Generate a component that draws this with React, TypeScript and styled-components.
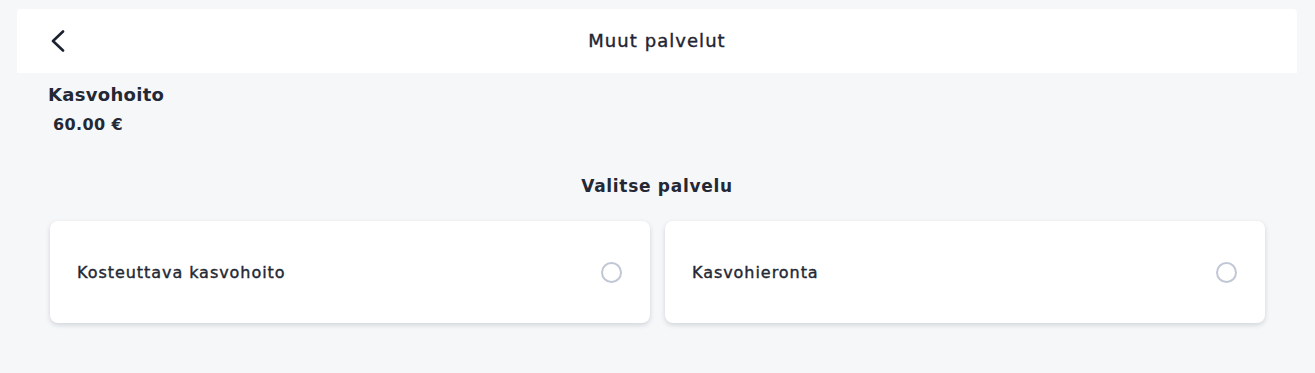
import React from "react";
import styled, { createGlobalStyle } from "styled-components";

const GlobalStyle = createGlobalStyle`
  html, body {
    margin: 0;
    padding: 0;
    background: #f6f7f9;
    font-family: "DejaVu Sans", "Open Sans", sans-serif;
    color: #232834;
  }
`;

const Page = styled.div`
  padding: 9px 18px 0 17px;
  min-height: 373px;
  box-sizing: border-box;
`;

const Header = styled.header`
  position: relative;
  height: 64px;
  background: #ffffff;
  border-radius: 4px 4px 0 0;
  display: flex;
  align-items: center;
  justify-content: center;
`;

const BackButton = styled.button`
  position: absolute;
  left: 34px;
  top: 21px;
  border: none;
  background: none;
  padding: 0;
  display: flex;
  color: #1d2230;
  cursor: pointer;
`;

const Title = styled.h1`
  margin: 0;
  font-size: 18px;
  font-weight: 400;
  line-height: 24px;
  letter-spacing: 1.05px;
  -webkit-text-stroke: 0.4px currentColor;
  color: #1f2533;
`;

const Service = styled.section`
  padding: 10px 0 0 31px;
`;

const ServiceName = styled.h2`
  margin: 0;
  font-size: 18px;
  font-weight: 700;
  line-height: 24px;
  letter-spacing: 0.3px;
`;

const Price = styled.div`
  margin: 8px 0 0 5px;
  font-size: 16px;
  font-weight: 700;
  line-height: 20px;
  letter-spacing: 0.4px;
`;

const SectionTitle = styled.h3`
  margin: 39px 0 0;
  text-align: center;
  font-size: 17px;
  font-weight: 700;
  line-height: 24px;
  letter-spacing: 0.7px;
`;

const Options = styled.div`
  display: grid;
  grid-template-columns: 1fr 1fr;
  gap: 15px;
  margin: 23px 32px 0 33px;
`;

const OptionCard = styled.label`
  height: 102px;
  background: #ffffff;
  border-radius: 8px;
  box-shadow: 0 2px 5px rgba(30, 40, 60, 0.17);
  display: flex;
  align-items: center;
  justify-content: space-between;
  padding: 0 28px 0 27px;
  box-sizing: border-box;
  cursor: pointer;
`;

const OptionLabel = styled.span`
  font-size: 16px;
  font-weight: 400;
  letter-spacing: 0.95px;
  -webkit-text-stroke: 0.4px currentColor;
`;

const Radio = styled.span`
  width: 21px;
  height: 21px;
  border: 2px solid #c0c7d5;
  border-radius: 50%;
  box-sizing: border-box;
`;

const options = ["Kosteuttava kasvohoito", "Kasvohieronta"];

export default function App() {
  return (
    <>
      <GlobalStyle />
      <Page>
        <Header>
          <BackButton aria-label="Takaisin">
            <svg width="14" height="22" viewBox="0 0 14 22" fill="none">
              <path
                d="M12 1.5 2 11l10 9.5"
                stroke="currentColor"
                strokeWidth="2.6"
                strokeLinecap="round"
                strokeLinejoin="round"
              />
            </svg>
          </BackButton>
          <Title>Muut palvelut</Title>
        </Header>
        <Service>
          <ServiceName>Kasvohoito</ServiceName>
          <Price>60.00 €</Price>
        </Service>
        <SectionTitle>Valitse palvelu</SectionTitle>
        <Options>
          {options.map((o) => (
            <OptionCard key={o}>
              <OptionLabel>{o}</OptionLabel>
              <Radio />
            </OptionCard>
          ))}
        </Options>
      </Page>
    </>
  );
}
